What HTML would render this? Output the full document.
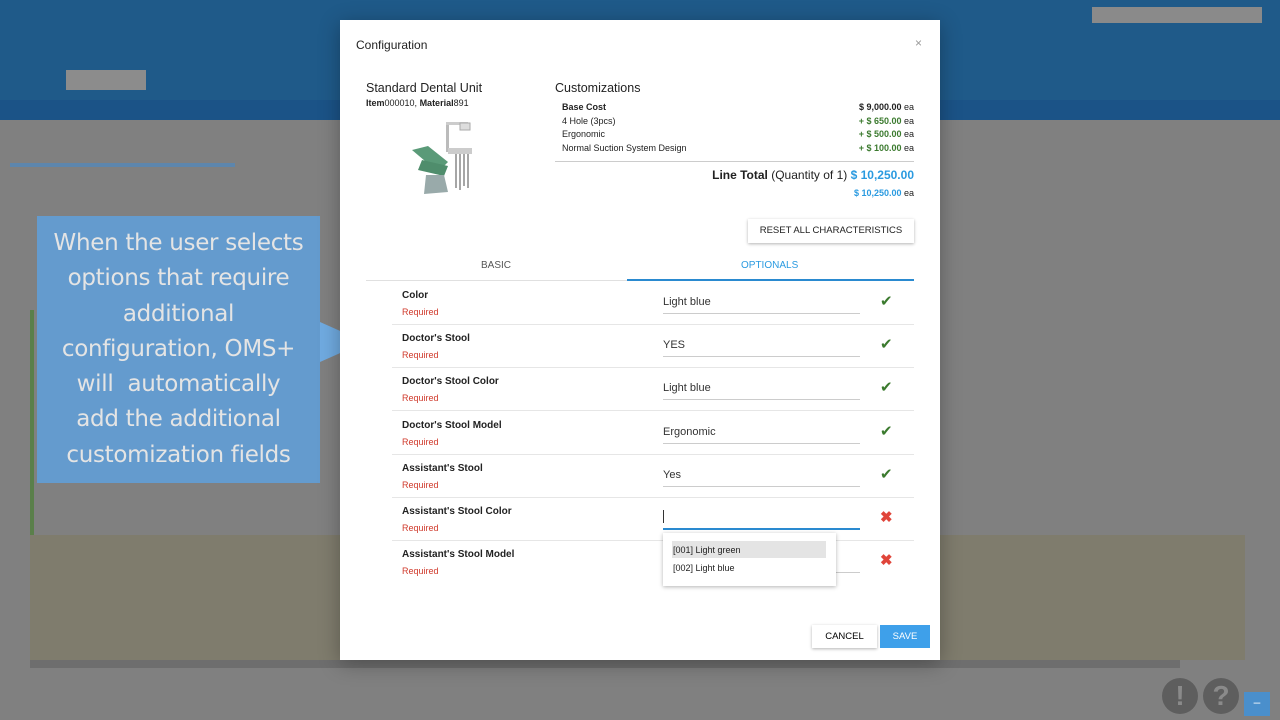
<!DOCTYPE html>
<html><head><style>
*{margin:0;padding:0;box-sizing:border-box}
body{width:1280px;height:720px;overflow:hidden;background:#808080;font-family:"Liberation Sans",sans-serif;position:relative}
.abs{position:absolute}
.hdr{left:0;top:0;width:1280px;height:120px;background:#1f5a89}
.hdr2{left:0;top:100px;width:1280px;height:20px;background:#1b5387}
.beige{left:30px;top:535px;width:1215px;height:125px;background:#7f7c6d}
.callout{left:37px;top:216px;width:283px;height:267px;background:rgba(95,160,220,0.85);color:#e4e4e4;font-family:"DejaVu Sans",sans-serif;font-size:23px;line-height:35.3px;text-align:center;padding-top:10px;letter-spacing:-0.3px}
.arrow{left:320px;top:322px;width:0;height:0;border-top:20px solid transparent;border-bottom:20px solid transparent;border-left:45px solid rgba(110,175,235,0.9)}
.modal{left:340px;top:20px;width:600px;height:640px;background:#fff;box-shadow:0 4px 20px rgba(0,0,0,.3)}
.t{position:absolute;white-space:nowrap;color:#222}
.g{color:#3b7a2e}
.b{color:#2a9ae0}
.row{position:absolute;left:52px;width:522px;height:43px;border-bottom:1px solid #e6e6e6}
.row .lab{position:absolute;left:10px;top:8px;font-size:10px;font-weight:bold;color:#222}
.row .req{position:absolute;left:10px;top:25px;font-size:9px;color:#d0392b}
.row .val{position:absolute;left:271px;top:14px;font-size:11px;color:#333}
.row .ln{position:absolute;left:271px;top:31px;width:197px;height:1px;background:#ccc}
.row .ic{position:absolute;left:488px;top:10px;font-size:15px}
.ck{color:#3b7a2e}.x{color:#e0453a;font-weight:bold}
</style></head><body>
<div class="abs hdr"></div>
<div class="abs hdr2"></div>
<div class="abs" style="left:66px;top:70px;width:80px;height:20px;background:#8c8c8c"></div>
<div class="abs" style="left:1092px;top:7px;width:170px;height:16px;background:#8a8a8a"></div>
<div class="abs" style="left:10px;top:163px;width:225px;height:4px;background:#5d86ad"></div>
<div class="abs beige"></div>
<div class="abs" style="left:30px;top:310px;width:4px;height:225px;background:#5a7f4a"></div>
<div class="abs" style="left:30px;top:660px;width:1150px;height:8px;background:#6e6e6e"></div>
<div class="abs" style="left:1162px;top:678px;width:36px;height:36px;border-radius:50%;background:#5e5e5e;color:#8a8a8a;font-size:28px;font-weight:bold;text-align:center;line-height:36px">!</div>
<div class="abs" style="left:1203px;top:678px;width:36px;height:36px;border-radius:50%;background:#5e5e5e;color:#8a8a8a;font-size:28px;font-weight:bold;text-align:center;line-height:36px">?</div>
<div class="abs" style="left:1244px;top:692px;width:26px;height:24px;background:#4a8fcc;color:#fff;font-size:12px;text-align:center;line-height:20px">–</div>
<div class="abs callout">When the user selects<br>options that require<br>additional<br>configuration, OMS+<br>will&nbsp; automatically<br>add the additional<br>customization fields</div>
<div class="abs arrow"></div>

<div class="abs modal">
 <div class="t" style="left:16px;top:18px;font-size:12px">Configuration</div>
 <div class="t" style="left:575px;top:16px;font-size:12px;color:#999">×</div>
 <div class="t" style="left:26px;top:61px;font-size:12.5px">Standard Dental Unit</div>
 <div class="t" style="left:26px;top:78px;font-size:9px"><b>Item</b>000010, <b>Material</b>891</div>
 <svg class="abs" style="left:68px;top:100px" width="86" height="78" viewBox="0 0 86 78">
  <rect x="38" y="2" width="3" height="30" fill="#bbb"/><rect x="38" y="2" width="22" height="3" fill="#ccc"/><rect x="52" y="3" width="10" height="7" fill="#ddd" stroke="#aaa"/>
  <path d="M4 30 L20 26 L40 42 L30 52 Z" fill="#5a9a78"/><path d="M14 40 L40 46 L36 56 L10 50Z" fill="#4f8d6c"/>
  <path d="M18 55 L36 55 L40 72 L16 74Z" fill="#9aa"/><rect x="40" y="28" width="24" height="6" fill="#ccc"/>
  <path d="M48 34v34M52 34v36M56 34v32M60 34v34" stroke="#888" stroke-width="1.5"/>
 </svg>
 <div class="t" style="left:215px;top:61px;font-size:12.5px">Customizations</div>
 <div class="t" style="left:222px;top:82px;font-size:9px;font-weight:bold">Base Cost</div>
 <div class="t" style="left:222px;top:96px;font-size:9px">4 Hole (3pcs)</div>
 <div class="t" style="left:222px;top:109px;font-size:9px">Ergonomic</div>
 <div class="t" style="left:222px;top:123px;font-size:9px">Normal Suction System Design</div>
 <div class="t" style="right:26px;top:82px;font-size:9px"><b>$ 9,000.00</b> ea</div>
 <div class="t" style="right:26px;top:96px;font-size:9px"><b class="g">+ $ 650.00</b> ea</div>
 <div class="t" style="right:26px;top:109px;font-size:9px"><b class="g">+ $ 500.00</b> ea</div>
 <div class="t" style="right:26px;top:123px;font-size:9px"><b class="g">+ $ 100.00</b> ea</div>
 <div class="abs" style="left:215px;top:141px;width:359px;height:1px;background:#ccc"></div>
 <div class="t" style="right:26px;top:148px;font-size:12px"><b>Line Total</b> (Quantity of 1) <b class="b">$ 10,250.00</b></div>
 <div class="t" style="right:26px;top:168px;font-size:9px"><b class="b">$ 10,250.00</b> ea</div>
 <div class="abs" style="left:408px;top:199px;width:166px;height:24px;background:#fff;box-shadow:0 1px 3px rgba(0,0,0,.3);font-size:9.5px;text-align:center;line-height:24px;color:#222">RESET ALL CHARACTERISTICS</div>
 <div class="t" style="left:141px;top:240px;font-size:10px;color:#555">BASIC</div>
 <div class="t" style="left:401px;top:240px;font-size:10px;color:#2a9ae0">OPTIONALS</div>
 <div class="abs" style="left:26px;top:260px;width:548px;height:1px;background:#e0e0e0"></div>
 <div class="abs" style="left:287px;top:259px;width:287px;height:2px;background:#2a8ad0"></div>

 <div class="row" style="top:262px"><div class="lab">Color</div><div class="req">Required</div><div class="val">Light blue</div><div class="ln"></div><div class="ic ck">✔</div></div>
 <div class="row" style="top:305px"><div class="lab">Doctor's Stool</div><div class="req">Required</div><div class="val">YES</div><div class="ln"></div><div class="ic ck">✔</div></div>
 <div class="row" style="top:348px"><div class="lab">Doctor's Stool Color</div><div class="req">Required</div><div class="val">Light blue</div><div class="ln"></div><div class="ic ck">✔</div></div>
 <div class="row" style="top:392px"><div class="lab">Doctor's Stool Model</div><div class="req">Required</div><div class="val">Ergonomic</div><div class="ln"></div><div class="ic ck">✔</div></div>
 <div class="row" style="top:435px"><div class="lab">Assistant's Stool</div><div class="req">Required</div><div class="val">Yes</div><div class="ln"></div><div class="ic ck">✔</div></div>
 <div class="row" style="top:478px"><div class="lab">Assistant's Stool Color</div><div class="req">Required</div><div class="val" style="top:12px;width:1px;height:13px;background:#333"></div><div class="ln" style="height:2px;background:#2a8ad0;top:30px"></div><div class="ic x">✖</div></div>
 <div class="row" style="top:521px;border:none"><div class="lab">Assistant's Stool Model</div><div class="req">Required</div><div class="ln"></div><div class="ic x">✖</div></div>
 <div class="abs" style="left:323px;top:513px;width:173px;height:53px;background:#fff;box-shadow:0 1px 4px rgba(0,0,0,.3)">
  <div class="abs" style="left:9px;top:8px;width:154px;height:17px;background:#e4e4e4"></div>
  <div class="t" style="left:10px;top:12px;font-size:9px">[001] Light green</div>
  <div class="t" style="left:10px;top:30px;font-size:9px">[002] Light blue</div>
 </div>
 <div class="abs" style="left:472px;top:605px;width:65px;height:23px;background:#fff;box-shadow:0 1px 3px rgba(0,0,0,.3);font-size:9.5px;text-align:center;line-height:23px">CANCEL</div>
 <div class="abs" style="left:540px;top:605px;width:50px;height:23px;background:#3ea0ea;color:#fff;font-size:9.5px;text-align:center;line-height:23px">SAVE</div>
</div>
</body></html>
